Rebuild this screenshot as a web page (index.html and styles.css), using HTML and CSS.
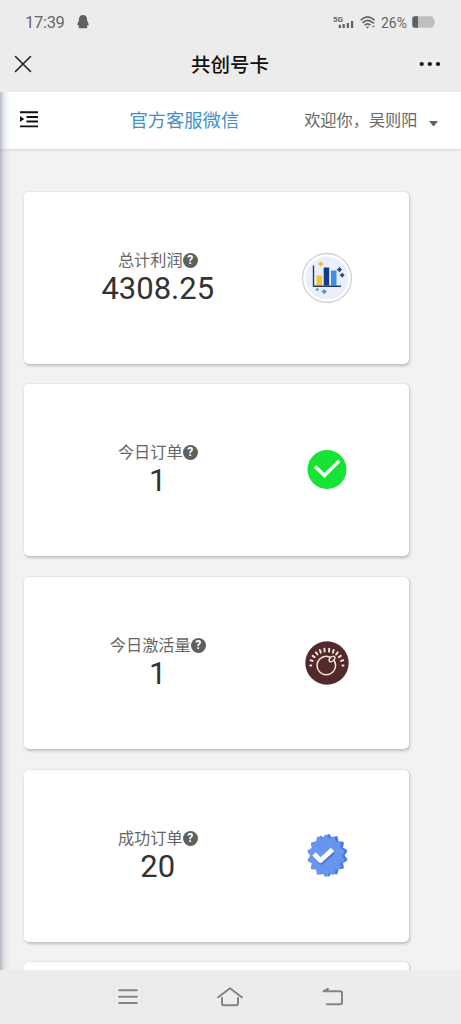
FILE: index.html
```html
<!DOCTYPE html>
<html lang="zh-CN">
<head>
<meta charset="utf-8">
<title>共创号卡</title>
<link rel="stylesheet" href="styles.css">
</head>
<body>
<div class="phone">
  <div class="status">
    <span class="time">17:39</span>
    <svg class="bell" width="12" height="14" viewBox="0 0 12 14"><path d="M6 0C3.400 0 1.900 2 1.900 4.500v1.200C1 7 .3 8.500.4 10c.1.800.7.600 1.200 0l.5 1.700c-.8.600-.8 1.500.3 1.500h7.200c1.100 0 1.100-.9.300-1.500l.5-1.700c.5.600 1.100.800 1.200 0 .1-1.500-.6-3-1.500-4.300V4.500C10.100 2 8.600 0 6 0z" fill="#606060"/></svg>
    <span class="grow"></span>
    <svg width="22" height="14" viewBox="0 0 22 14" class="signal"><text x="0" y="6.500" class="fiveg">5G</text><g fill="#636363"><rect x="5.700" y="9.700" width="2.300" height="3.300"/><rect x="9.500" y="9" width="2.300" height="4"/><rect x="13.700" y="8" width="2.300" height="5"/><rect x="17.900" y="6" width="2.300" height="7"/></g></svg>
    <svg width="16" height="13" viewBox="0 0 16 13" class="wifi"><g fill="none" stroke="#636363" stroke-width="1.700"><path d="M.7 4.200Q7.500-2.300 14.600 4.200"/><path d="M2.600 6.900Q7.500 2.200 12.500 6.600"/><path d="M4.700 9.200Q7.500 6.500 10.500 9.200"/></g><path d="M5.800 10.500h3.500L7.500 12.500zM12 7.500l1.400-2 1.400 2zM12 9.800l1.400 2 1.400-2z" fill="#636363"/></svg>
    <span class="percent">26%</span>
    <svg width="24" height="12" viewBox="0 0 24 12"><path d="M3 .3h15.500c1.500 0 2.200.5 2.800 1.500l1.200 2.500q.7 1.700 0 3.400l-1.200 2.500c-.6 1-1.300 1.500-2.800 1.500H3C1 11.700.3 10.500.3 9V3C.3 1.500 1 .3 3 .3z" fill="#bfbfbf"/><path d="M6 .3v11.400H3C1 11.700.3 10.500.3 9V3C.3 1.500 1 .3 3 .3z" fill="#606060"/></svg>
  </div>
  <header class="titlebar">
    <svg width="18" height="18" viewBox="0 0 18 18"><path d="M1.500 1.500l15 15M16.500 1.500l-15 15" stroke="#222" stroke-width="1.600" stroke-linecap="round"/></svg>
    <h1>共创号卡</h1>
    <svg width="22" height="6" viewBox="0 0 22 6" fill="#111"><circle cx="2.700" cy="3" r="2.100"/><circle cx="10.800" cy="3" r="2.100"/><circle cx="19" cy="3" r="2.100"/></svg>
  </header>
  <div class="page">
    <nav class="navbar">
      <svg class="toggle" width="18" height="17" viewBox="0 0 18 17"><path d="M0 1.200h18M6.500 6h11.500M6.500 10.500h11.500M0 15.400h18" stroke="#111" stroke-width="1.900"/><path d="M0 5v6l4.200-3z" fill="#111"/></svg>
      <a class="service">官方客服微信</a>
      <div class="user"><span>欢迎你，吴则阳</span><svg width="9" height="6" viewBox="0 0 9 6"><path d="M0 0h9L4.500 5.500z" fill="#606060"/></svg></div>
    </nav>
    <main class="cards">
      <section class="card">
        <div class="stat"><p>总计利润<i class="help">?</i></p><strong>4308.25</strong></div>
        <div class="icon"><svg width="52" height="52" viewBox="0 0 52 52"><circle cx="26" cy="26" r="24.500" fill="#fff" stroke="#d3d2d4" stroke-width="1.300"/><circle cx="26" cy="26" r="21.500" fill="#eaf0fb"/><rect x="15.500" y="23.500" width="5.500" height="10" fill="#f7c331"/><rect x="22.700" y="15.500" width="5.500" height="18" fill="#173b87"/><rect x="30" y="18.500" width="5.500" height="15" fill="#3a91e6"/><path d="M12.500 13.500v20.800H40" fill="none" stroke="#27375f" stroke-width="1.400"/><path d="M19.700 9l1.300 1.700 1.700 1.300-1.700 1.300-1.300 1.700-1.300-1.700-1.700-1.300 1.700-1.300z" fill="#f5bd42"/><path d="M38.500 14.800l1.200 1.600 1.700 1.200-1.700 1.200-1.200 1.600-1.200-1.600-1.700-1.200 1.700-1.200zM41.200 20.600l1.100 1.500 1.500 1.100-1.500 1.100-1.100 1.500-1.100-1.500-1.500-1.100 1.500-1.100z" fill="#24427e"/><path d="M23.200 36.800l1.200 1.600 1.600 1.200-1.600 1.200-1.200 1.600-1.200-1.600-1.600-1.200 1.600-1.200zM16.300 35.600l.8 1.100 1.100.8-1.100.8-.8 1.100-.8-1.100-1.100-.8 1.100-.8z" fill="#4493df"/></svg></div>
      </section>
      <section class="card">
        <div class="stat"><p>今日订单<i class="help">?</i></p><strong>1</strong></div>
        <div class="icon"><svg width="40" height="40" viewBox="0 0 40 40"><circle cx="20" cy="19.500" r="19.500" fill="#16e334"/><path d="M8 16.500l9.500 9L32.300 10.800" fill="none" stroke="#fff" stroke-width="3.500"/></svg></div>
      </section>
      <section class="card">
        <div class="stat"><p>今日激活量<i class="help">?</i></p><strong>1</strong></div>
        <div class="icon"><svg width="44" height="44" viewBox="0 0 44 44"><circle cx="22" cy="22" r="21.700" fill="#522a2b"/><g fill="none" stroke="#f6e4d8"><circle cx="21.300" cy="24.500" r="9.300" stroke-width="1.500"/><ellipse cx="27" cy="18" rx="3.400" ry="2" transform="rotate(-42 27 18)" fill="#522a2b" stroke-width="1.400"/><path d="M5.300 24.500h1M5.600 19.300l2 .6M7.700 14.900l1.900 1.300M10.900 11.300l1.600 2.200M14.900 9l.9 2.600M19.400 7.700l.2 2.900M24.200 7.700l-.2 2.900M28.700 9l-.9 2.600M32.700 11.300l-1.600 2.200M35.800 14.900l-1.900 1.300M38.100 19.300l-2 .6M38.400 24.500h-1" stroke-width="2" stroke-linecap="round"/></g></svg></div>
      </section>
      <section class="card">
        <div class="stat"><p>成功订单<i class="help">?</i></p><strong>20</strong></div>
        <div class="icon"><svg width="44" height="46" viewBox="0 0 44 46">
          <defs><path id="seal" d="M0-20L3.600-15.600 8.700-18 10-12.500 15.600-12.500 14.400-6.900 19.500-4.500 16 0 19.500 4.500 14.400 6.900 15.600 12.500 10 12.500 8.700 18 3.600 15.600 0 20-3.600 15.600-8.700 18-10 12.500-15.600 12.500-14.400 6.900-19.500 4.500-16 0-19.500-4.500-14.400-6.900-15.600-12.500-10-12.500-8.700-18-3.600-15.600z"/></defs>
          <g stroke-linejoin="round" stroke-width="3.500"><use href="#seal" transform="translate(23.600 22.300) scale(.88 .97)" fill="#4a7ddd" stroke="#4a7ddd"/><use href="#seal" transform="translate(20.800 22.700) scale(.86 .97)" fill="#6696ef" stroke="#6696ef"/></g>
          <path d="M10 23l6.300 6.300L28.500 18.500" fill="none" stroke="#4879d8" stroke-width="4.800" stroke-linejoin="round"/><path d="M9 21l6.500 6.500L27.500 16.500" fill="none" stroke="#fff" stroke-width="4.800" stroke-linejoin="round"/></svg></div>
      </section>
      <section class="card"></section>
    </main>
  </div>
  <footer class="system">
    <svg width="20" height="18" viewBox="0 0 20 18"><path d="M1.200 2.300h17.600M1.200 8.700h17.600M1.200 15.100h17.600"/></svg>
    <svg width="26" height="20" viewBox="0 0 26 20"><path d="M1.200 10.300L13 1.200l11.800 9.100M5 11v5.500q0 1.700 1.700 1.700h12.600q1.700 0 1.700-1.700V11"/></svg>
    <svg width="22" height="18" viewBox="0 0 22 18"><path d="M6 .8L1.500 3.300h16.800q1.700 0 1.700 1.700v9.600q0 1.700-1.700 1.700H5"/></svg>
  </footer>
</div>
</body>
</html>
```
FILE: styles.css
```css
* { box-sizing: border-box; }
body { margin: 0; font-family: Roboto, "Noto Sans CJK SC", sans-serif; }
.phone { width: 461px; height: 1024px; display: flex; flex-direction: column; overflow: hidden; background: #ececec; }
.status { height: 44px; padding: 0 25px; display: flex; align-items: center; color: #666; }
.time { font-size: 16.500px; line-height: 20px; width: 39px; letter-spacing: -.3px; padding-top: 1px; }
.bell { margin-left: 13px; }
.grow { flex: 1; }
.signal { margin-right: 5px; }
.fiveg { font: 700 8px Roboto, sans-serif; fill: #636363; }
.wifi { margin-right: 5px; }
.percent { font-size: 14px; width: 31px; padding-top: 1px; }
.titlebar { height: 48px; padding: 0 20px 8px 14px; display: grid; grid-template-columns: 80px 1fr 80px; align-items: center; }
.titlebar h1 { margin: 0; padding: 4px 0 0 5px; font-size: 19.500px; line-height: 28px; font-weight: 500; text-align: center; color: #111; }
.titlebar svg:last-child { justify-self: end; }
.page { flex: 1; min-height: 0; overflow: hidden; background: #f2f2f2; position: relative; }
.page::before { content: ""; position: absolute; inset: 0 auto 0 0; width: 10px; background: linear-gradient(90deg, rgba(110,124,137,.5), rgba(145,157,168,.2) 40%, rgba(180,190,200,0)); }
.navbar { height: 57px; padding: 0 23px 0 20px; display: flex; align-items: center; background: #fff; box-shadow: 0 1px 3px rgba(0,0,0,.12); }
.toggle { margin-bottom: 2px; }
.service { margin: 1px 0 0 91.500px; color: #3d91cb; font-size: 18.300px; line-height: 26px; }
.user { margin-left: auto; display: flex; align-items: center; gap: 11.500px; padding-top: 1px; color: #666; font-size: 16.200px; line-height: 24px; }
.user svg { margin-top: 6px; }
.cards { padding: 42.800px 52px 0 23.500px; display: flex; flex-direction: column; gap: 20.600px; }
.card { height: 172px; flex: none; border-radius: 5px; background: #fff; box-shadow: 1px 1.500px 3px rgba(0,0,0,.2), 0 0 2px rgba(0,0,0,.08); display: grid; grid-template-columns: 268.500px 70px; align-items: center; }
.stat { text-align: center; }
.stat p { margin: 0; display: flex; justify-content: center; align-items: center; font-size: 16.200px; line-height: 22px; color: #666; }
.stat strong { display: block; font-size: 31px; line-height: 34px; font-weight: 400; color: #333; }
.help { width: 15px; height: 15px; margin-bottom: 1px; border-radius: 50%; background: #5f5f5f; color: #fff; font: 700 12px/15px Roboto, sans-serif; text-align: center; }
.icon { display: flex; justify-content: center; }
.system { height: 54px; padding: 0 117px 1px 118px; display: flex; align-items: center; justify-content: space-between; }
.system svg { fill: none; stroke: #858384; stroke-width: 2; stroke-linecap: round; stroke-linejoin: round; }
```
